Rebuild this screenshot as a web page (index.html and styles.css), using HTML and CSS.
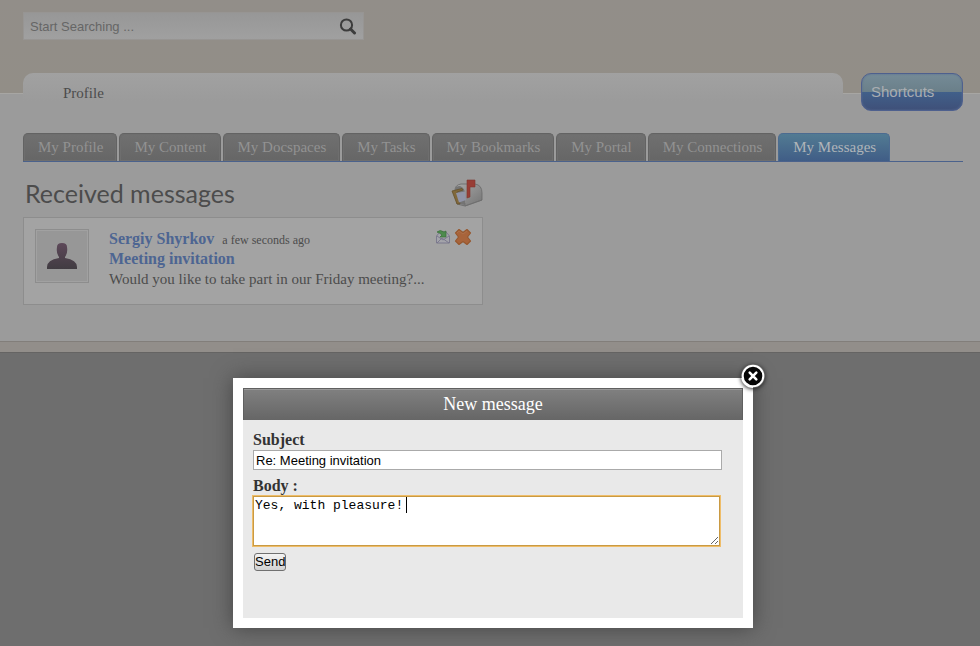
FILE: index.html
```html
<!DOCTYPE html>
<html lang="en">
<head>
<meta charset="utf-8">
<title>My Messages</title>
<link rel="stylesheet" href="styles.css">
</head>
<body>
<header class="top">
  <form class="search">
    <input class="search-input" type="text" placeholder="Start Searching ..." aria-label="Search">
    <button class="search-btn" type="button" aria-label="Search">
      <svg width="18" height="18" viewBox="0 0 18 18"><circle cx="7.500" cy="8" r="5.6" fill="none" stroke="#3c3c3c" stroke-width="2"/><path d="M11.500 12l4 4" stroke="#3c3c3c" stroke-width="3" stroke-linecap="round"/></svg>
    </button>
  </form>
  <div class="title-row">
    <div class="page-title">Profile</div>
    <button class="shortcuts" type="button">Shortcuts</button>
  </div>
</header>
<main class="content">
  <nav class="tabs">
    <a href="#">My Profile</a>
    <a href="#">My Content</a>
    <a href="#">My Docspaces</a>
    <a href="#">My Tasks</a>
    <a href="#">My Bookmarks</a>
    <a href="#">My Portal</a>
    <a href="#">My Connections</a>
    <a href="#" class="active">My Messages</a>
  </nav>
  <section class="inbox">
    <div class="inbox-head">
      <h1>Received messages</h1>
      <svg width="32" height="28" viewBox="0 0 32 28">
        <defs><linearGradient id="box" x1="0" y1="0" x2="1" y2="1"><stop offset="0" stop-color="#a8a8a8"/><stop offset="1" stop-color="#747474"/></linearGradient></defs>
        <path d="M4 11Q4 6 10 5L24 5Q31 6 31 14V21L14 27L6 25Z" fill="url(#box)" stroke="#686868" stroke-width=".8"/>
        <path d="M4 11Q4 7 9 7Q14 9 14 15V26L6 24Z" fill="#747474"/>
        <path d="M1 12L11 9.500L12 11L6 13L9 25L6 25Z" fill="#80683a" stroke="#66522c" stroke-width=".8"/>
        <path d="M5 14L14 12.500L15 21L8 23.500Z" fill="#9094a8"/>
        <path d="M14 24V27L31 21" fill="none" stroke="#6f6f6f" stroke-width=".8"/>
        <path d="M16 19V1H24V8H19V18Z" fill="#983d35" stroke="#82352f" stroke-width=".6"/>
      </svg>
    </div>
    <article class="message">
      <div class="avatar">
        <svg width="32" height="28" viewBox="0 0 32 28">
          <defs><linearGradient id="man" x1="0" y1="0" x2="0" y2="1"><stop offset="0" stop-color="#5d4859"/><stop offset="1" stop-color="#413c42"/></linearGradient></defs>
          <path d="M11 5Q11 1 16 1T21 5Q22 11 19 15V16Q31 18 31 25V27H1V25Q1 18 13 16V15Q10 11 11 5Z" fill="url(#man)"/>
        </svg>
      </div>
      <div class="message-text">
        <div class="line"><a href="#">Sergiy Shyrkov</a><time>a few seconds ago</time></div>
        <div class="line"><a href="#">Meeting invitation</a></div>
        <p>Would you like to take part in our Friday meeting?...</p>
      </div>
      <div class="actions">
        <button type="button" aria-label="Reply">
          <svg width="16" height="16" viewBox="0 0 16 16"><path d="M1.500 7L5 3H11L14.500 7V14H1.500Z" fill="#a4a4aa" stroke="#77758b" stroke-width=".9"/><path d="M2 14L7 9L14 14M2 7L8 11L14 7" fill="none" stroke="#77758b" stroke-width=".9"/><path d="M2 3Q5 0 9 3L11 2V8H5L7 6Q5 4 2 3Z" fill="#4d8b4d" stroke="#397039" stroke-width=".7"/></svg>
        </button>
        <button type="button" aria-label="Delete">
          <svg width="18" height="18" viewBox="0 0 18 18"><path d="M5 1.500L9 4.500L13 1.500L16.500 5L13.500 9L16.500 13L13 16.500L9 13.500L5 16.500L1.500 13L4.500 9L1.500 5Z" fill="#a8643b" stroke="#97582f" stroke-width="1.200" stroke-linejoin="round"/><path d="M3 5L5 3L9 6L13 3" fill="none" stroke="#b0734d" stroke-width=".8"/></svg>
        </button>
      </div>
    </article>
  </section>
</main>
<div class="band"></div>

<div class="modal" role="dialog" aria-labelledby="dlg-title">
  <button class="close" type="button" aria-label="Close">
    <svg width="24" height="24" viewBox="0 0 24 24"><circle cx="12" cy="12" r="10.3" fill="#050505" stroke="#fff" stroke-width="2"/><path d="M8.7 8.7l6.6 6.6M15.3 8.7l-6.6 6.6" stroke="#fff" stroke-width="2.6" stroke-linecap="round"/></svg>
  </button>
  <h2 id="dlg-title">New message</h2>
  <form class="compose">
    <label for="subject">Subject</label>
    <input id="subject" type="text" value="Re: Meeting invitation">
    <label for="body">Body :</label>
    <div class="body-wrap">
      <textarea id="body">Yes, with pleasure!</textarea>
      <span class="caret"></span>
    </div>
    <button class="send" type="button">Send</button>
  </form>
</div>
</body>
</html>
```
FILE: styles.css
```css
* { box-sizing: border-box; }
body {
  margin: 0;
  min-height: 100vh;
  background: #6e6e6e;
  color: #4c4c4c;
  font: 15px/20px Georgia, "Liberation Serif", serif;
}
h1, h2, p { margin: 0; font-weight: normal; }
a { text-decoration: none; }
button { padding: 0; border: 0; background: none; }
svg { display: block; }

.top {
  padding: 12px 17px 0 23px;
  background: linear-gradient(#928e89, #928e87 93px, #a7a6a3 93px, #a7a6a3 94px, #9b9b9b 94px);
}
.search {
  display: flex;
  align-items: center;
  width: 341px;
  height: 28px;
  padding: 0 6px;
  border: 1px solid #979593;
  background: linear-gradient(#979797, #a0a0a0);
}
.search-input {
  flex: 1;
  padding: 0;
  border: 0;
  background: none;
  font: 13px "Liberation Sans", sans-serif;
}
.search-input::placeholder { color: #666; }
.title-row {
  display: flex;
  gap: 18px;
  margin-top: 33px;
}
.page-title {
  flex: 1;
  height: 38px;
  padding: 10px 40px;
  border-radius: 10px 10px 0 0;
  background: linear-gradient(#a1a1a1, #9b9b9b 28px);
}
.shortcuts {
  width: 102px;
  height: 38px;
  padding: 0 9px 2px;
  border: 1px solid #4e608e;
  border-radius: 10px;
  background: linear-gradient(#758b97, #6a7f89 50%, #41608a 50%, #3f5079);
  box-shadow: inset 0 0 2px #566a91;
  color: #a9adb2;
  font: 15px "Liberation Sans", sans-serif;
  text-align: left;
}

.content {
  padding: 22px 17px 36px 23px;
  background: #9b9b9b;
}
.tabs {
  display: flex;
  gap: 2px;
  border-bottom: 1px solid #4b628c;
}
.tabs a {
  height: 28px;
  padding: 3px 13px 5px 14px;
  border: 1px solid #636363;
  border-bottom: 0;
  border-radius: 5px 5px 0 0;
  background: linear-gradient(#707070, #666);
  box-shadow: inset 0 0 0 1px #6e6e6e;
  color: #929292;
}
.tabs .active {
  border-color: #4c6b90;
  background: linear-gradient(#527b93, #405d86);
  box-shadow: none;
  color: #b0b5b9;
}
.inbox { width: 460px; }
.inbox-head {
  display: flex;
  align-items: center;
  justify-content: space-between;
  height: 55px;
  padding: 6px 0 0 2px;
}
h1 { font: 25px/32px Lato, sans-serif; }
.message {
  display: flex;
  height: 88px;
  padding: 11px 10px 11px 11px;
  border: 1px solid #8d8d8d;
  background: #a3a3a3;
}
.avatar {
  display: grid;
  place-items: center;
  width: 54px;
  height: 54px;
  border: 1px solid #8d8d8d;
  background: #979797;
  box-shadow: inset 0 0 0 1px #a1a1a1;
}
.message-text { flex: 1; margin-left: 20px; white-space: nowrap; }
.line { height: 20px; }
.line a { color: #4d6592; font-size: 16px; font-weight: bold; }
time { margin-left: 8px; font-size: 12px; }
.actions { display: flex; align-items: center; gap: 3px; height: 16px; }

.band {
  height: 12px;
  border-top: 1px solid #827e7a;
  border-bottom: 1px solid #656463;
  background: #928e8a;
}

.modal {
  position: fixed;
  top: 378px;
  left: calc(50% - 257px);
  width: 520px;
  padding: 10px;
  background: #fff;
  box-shadow: 0 0 20px #444;
}
.close { position: absolute; top: -14px; right: -12px; border-radius: 50%; box-shadow: 0 1px 4px #222; }
h2 {
  border: 1px solid #606060;
  border-bottom: 0;
  background: linear-gradient(#808080, #666);
  box-shadow: inset 0 1px #999;
  color: #fff;
  font-size: 18px;
  line-height: 31px;
  text-align: center;
}
.compose {
  display: flex;
  flex-direction: column;
  align-items: flex-start;
  min-height: 198px;
  padding: 10px;
  background: #e9e9e9;
}
label { color: #333; font-size: 16px; font-weight: bold; }
#subject {
  width: 469px;
  height: 20px;
  margin-bottom: 6px;
  padding: 0 2px;
  border: 1px solid #aaa;
  background: #fff;
  color: #000;
  font: 13px "Liberation Sans", sans-serif;
}
.body-wrap { position: relative; width: 467px; }
textarea {
  display: block;
  width: 100%;
  height: 50px;
  padding: 1px;
  border: 1px solid #c99a43;
  outline: 1px solid #efbd69;
  background: #fff;
  color: #000;
  font: 13px/15px "Liberation Mono", monospace;
}
.caret { position: absolute; top: 1px; left: 153px; width: 1px; height: 16px; background: #000; }
.send {
  margin: 7px 1px;
  border: 1px solid #707070;
  border-radius: 3px;
  background: linear-gradient(#f4f4f4, #d2d2d2);
  color: #000;
  font: 13px/16px "Liberation Sans", sans-serif;
}
```
